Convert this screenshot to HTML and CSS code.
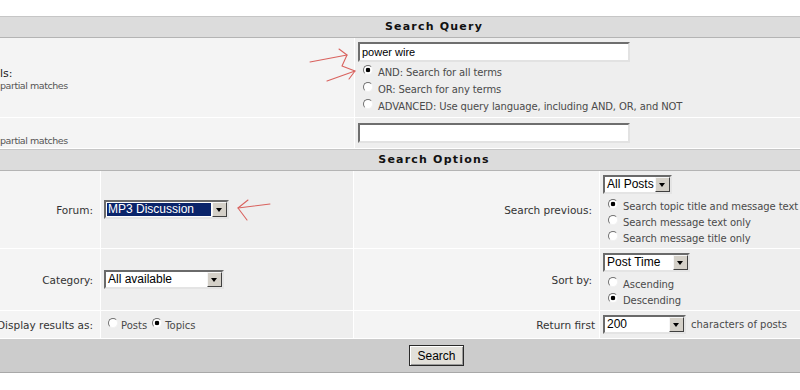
FILE: index.html
```html
<!DOCTYPE html>
<html>
<head>
<meta charset="utf-8">
<title>Search</title>
<link rel="stylesheet" href="styles.css">
</head>
<body>
<div class="page">
  <div class="bar">Search Query</div>
  <div class="qgrid">
    <div class="lcell lcell-top">
      <div class="lname">ls:</div>
      <div class="lhint">partial matches</div>
    </div>
    <div class="fcell fcell-top">
      <input class="txt" type="text" value="power wire">
      <div class="opts opts-q">
        <label class="opt"><span class="rad on"></span>AND: Search for all terms</label>
        <label class="opt"><span class="rad"></span>OR: Search for any terms</label>
        <label class="opt"><span class="rad"></span>ADVANCED: Use query language, including AND, OR, and NOT</label>
      </div>
    </div>
    <div class="lcell">
      <div class="lname">&nbsp;</div>
      <div class="lhint">partial matches</div>
    </div>
    <div class="fcell fcell-mid">
      <input class="txt" type="text" value="">
    </div>
  </div>

  <div class="bar bar-opts">Search Options</div>
  <div class="ogrid">
    <div class="ol">Forum:</div>
    <div class="of of-mid">
      <div class="sel sel-forum"><span class="val hl">MP3 Discussion</span><span class="arr"></span></div>
    </div>
    <div class="ol">Search previous:</div>
    <div class="of of-top">
      <div class="sel sel-posts"><span class="val">All Posts</span><span class="arr"></span></div>
      <div class="opts opts-o">
        <label class="opt"><span class="rad on"></span>Search topic title and message text</label>
        <label class="opt"><span class="rad"></span>Search message text only</label>
        <label class="opt"><span class="rad"></span>Search message title only</label>
      </div>
    </div>

    <div class="ol">Category:</div>
    <div class="of of-mid">
      <div class="sel sel-cat"><span class="val">All available</span><span class="arr"></span></div>
    </div>
    <div class="ol">Sort by:</div>
    <div class="of of-top">
      <div class="sel sel-sort"><span class="val">Post Time</span><span class="arr"></span></div>
      <div class="opts opts-o">
        <label class="opt"><span class="rad"></span>Ascending</label>
        <label class="opt"><span class="rad on"></span>Descending</label>
      </div>
    </div>

    <div class="ol">Display results as:</div>
    <div class="of of-inline">
      <span class="rad"></span><span class="itxt">Posts</span>
      <span class="rad rad-next on"></span><span class="itxt">Topics</span>
    </div>
    <div class="ol ol-tight">Return first</div>
    <div class="of of-ret">
      <div class="sel sel-ret"><span class="val">200</span><span class="arr"></span></div>
      <span class="after">characters of posts</span>
    </div>
  </div>

  <div class="foot"><button class="go" type="button">Search</button></div>

  <svg class="marks" width="800" height="390" viewBox="0 0 800 390">
    <g fill="none" stroke="#d9625e" stroke-width="1.1" stroke-linecap="round" stroke-linejoin="round">
      <line x1="310" y1="62" x2="347" y2="55"/>
      <polyline points="339,49 347,55 342,66 355,71 349,79"/>
      <line x1="327" y1="81" x2="355" y2="71"/>
      <polyline points="248,200 238,208 247,220"/>
      <line x1="238" y1="208" x2="270" y2="204"/>
    </g>
  </svg>
</div>
</body>
</html>
```

FILE: styles.css
```css
* { box-sizing: border-box; }

html, body {
  margin: 0;
  padding: 0;
  background: #ffffff;
}

body {
  font-family: "DejaVu Sans", Verdana, sans-serif;
  font-size: 10px;
  color: #333333;
}

.page {
  position: relative;
  width: 800px;
  height: 390px;
  padding-top: 16px;
  overflow: hidden;
}

/* section header bars */
.bar {
  height: 22px;
  background: #dcdcdc;
  border-top: 1px solid #c6c6c6;
  border-bottom: 1px solid #b4b4b4;
  padding-left: 68px;
  text-align: center;
  font-weight: bold;
  font-size: 11px;
  letter-spacing: 1.2px;
  line-height: 20px;
  color: #111111;
}

.bar-opts {
  margin-top: 1px;
}

/* query section */
.qgrid {
  display: grid;
  grid-template-columns: 354px 1fr;
  grid-template-rows: 79px 30px;
  column-gap: 1px;
  row-gap: 1px;
  background: #ffffff;
}

.lcell {
  background: #f4f4f4;
  display: flex;
  flex-direction: column;
  justify-content: center;
  padding-top: 4px;
  white-space: nowrap;
}

.lname {
  font-size: 11px;
  line-height: 12px;
  color: #222222;
}

.lhint {
  font-size: 9.5px;
  letter-spacing: -0.45px;
  line-height: 12px;
  color: #555555;
}

.fcell {
  background: #eeeeee;
  padding-left: 3px;
}

.fcell-top {
  padding-top: 4px;
}

.fcell-mid {
  display: flex;
  align-items: center;
}

.txt {
  display: block;
  width: 272px;
  height: 20px;
  margin: 0;
  padding: 0 2px;
  border: 2px solid;
  border-color: #6e6e6e #e2e2e2 #e2e2e2 #6e6e6e;
  background: #ffffff;
  font-family: "Liberation Sans", Arial, sans-serif;
  font-size: 11px;
  color: #000000;
  outline: none;
}

.opts {
  display: flex;
  flex-direction: column;
}

.opts-q {
  margin-top: 2px;
}

.opts-q .opt {
  height: 17px;
  line-height: 17px;
  letter-spacing: -0.12px;
}

.opts-o {
  margin-top: 5px;
}

.opts-o .opt {
  height: 16px;
  line-height: 16px;
  letter-spacing: -0.08px;
}

.opt {
  display: flex;
  align-items: center;
  padding-left: 5px;
  white-space: nowrap;
  color: #4a4a4a;
}

/* classic radio */
.rad {
  display: inline-block;
  flex: none;
  width: 10px;
  height: 10px;
  margin-right: 5px;
  border-radius: 50%;
  border: 1px solid;
  border-color: #707070 #f2f2f2 #f2f2f2 #707070;
  background: #ffffff;
  position: relative;
  top: -3px;
}

.rad.on {
  background: radial-gradient(circle at 50% 50%, #000000 0, #000000 2px, #ffffff 2.6px);
}

/* options section */
.ogrid {
  display: grid;
  grid-template-columns: 100px 252px 245px 1fr;
  grid-template-rows: 77px 61px 27px;
  column-gap: 1px;
  row-gap: 1px;
  background: #ffffff;
}

.ol {
  background: #f4f4f4;
  display: flex;
  align-items: center;
  justify-content: flex-end;
  padding-right: 7px;
  white-space: nowrap;
  font-size: 10.5px;
  color: #333333;
}

.ol-tight {
  padding-right: 4px;
}

.of {
  background: #eeeeee;
  padding-left: 3px;
}

.of-mid {
  display: flex;
  align-items: center;
}

.of-top {
  padding-top: 4px;
}

.of-inline {
  display: flex;
  align-items: center;
  padding-left: 7px;
  padding-top: 2px;
  color: #4a4a4a;
}

.of-inline .rad {
  margin-right: 3px;
}

.of-inline .rad-next {
  margin-left: 5px;
}

.of-ret {
  display: flex;
  align-items: center;
  color: #4a4a4a;
}

.after {
  margin-left: 5px;
  white-space: nowrap;
}

/* classic select */
.sel {
  display: flex;
  height: 19px;
  border: 2px solid;
  border-color: #6a6a6a #e4e4e4 #e4e4e4 #6a6a6a;
  background: #ffffff;
  font-family: "Liberation Sans", Arial, sans-serif;
  font-size: 12px;
  color: #000000;
}

.sel .val {
  flex: 1;
  padding-left: 2px;
  line-height: 15px;
  white-space: nowrap;
  overflow: hidden;
}

.sel .val.hl {
  margin: 1px;
  padding-left: 1px;
  line-height: 13px;
  background: #0a246a;
  color: #ffffff;
}

.sel .arr {
  flex: none;
  width: 15px;
  background: #d4d0c8;
  border: 1px solid;
  border-color: #f6f6f6 #404040 #404040 #f6f6f6;
  position: relative;
}

.sel .arr::after {
  content: "";
  position: absolute;
  left: 3px;
  top: 5px;
  border-left: 3.5px solid transparent;
  border-right: 3.5px solid transparent;
  border-top: 4px solid #000000;
}

.sel-forum { width: 125px; }
.sel-cat { width: 120px; }
.sel-posts { width: 69px; }
.sel-sort { width: 87px; }
.sel-ret { width: 83px; }

/* footer */
.foot {
  height: 34px;
  margin-top: 1px;
  background: #cccccc;
  border-bottom: 1px solid #a8a8a8;
  display: flex;
  align-items: center;
  padding-left: 409px;
}

.go {
  width: 55px;
  height: 21px;
  margin: 0;
  padding: 0;
  border: 1px solid #2a2a2a;
  background: #e2e0da;
  box-shadow: inset 1px 1px 0 #ffffff, inset -1px -1px 0 #9a9a9a;
  font-family: "Liberation Sans", Arial, sans-serif;
  font-size: 12px;
  color: #000000;
}

.marks {
  position: absolute;
  left: 0;
  top: 0;
  pointer-events: none;
}
```
